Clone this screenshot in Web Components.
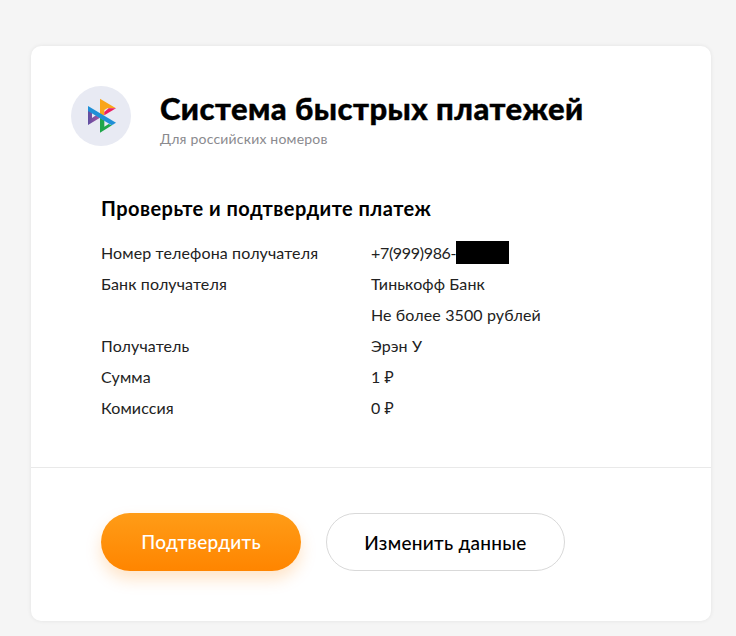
<!DOCTYPE html>
<html lang="ru">
<head>
<meta charset="utf-8">
<title>Система быстрых платежей</title>
<style>
  html, body { margin: 0; height: 100%; background: #f5f5f5; }
  body { font-family: Lato, "Noto Sans", sans-serif; overflow: hidden; }
</style>
</head>
<body>
<sbp-page>
  <sbp-card>
    <sbp-header slot="top" title="Система быстрых платежей" subtitle="Для российских номеров"></sbp-header>
    <sbp-details slot="top" heading="Проверьте и подтвердите платеж">
      <sbp-row label="Номер телефона получателя" tight>+7(999)986-<sbp-mask></sbp-mask></sbp-row>
      <sbp-row label="Банк получателя">Тинькофф Банк</sbp-row>
      <sbp-row label="">Не более 3500 рублей</sbp-row>
      <sbp-row label="Получатель">Эрэн У</sbp-row>
      <sbp-row label="Сумма">1 ₽</sbp-row>
      <sbp-row label="Комиссия">0 ₽</sbp-row>
    </sbp-details>
    <sbp-button slot="actions" kind="primary">Подтвердить</sbp-button>
    <sbp-button slot="actions">Изменить данные</sbp-button>
  </sbp-card>
</sbp-page>

<script>
class SbpPage extends HTMLElement {
  constructor() {
    super();
    this.attachShadow({ mode: 'open' }).innerHTML = `
      <style>
        :host { display: block; padding: 46px 25px 15px 31px; }
      </style>
      <slot></slot>`;
  }
}

class SbpCard extends HTMLElement {
  constructor() {
    super();
    this.attachShadow({ mode: 'open' }).innerHTML = `
      <style>
        :host {
          display: block;
          background: #fff;
          border-radius: 10px;
          box-shadow: 0 0 4px rgba(0, 0, 0, 0.08);
        }
        .top { height: 421px; border-bottom: 1px solid #e9e9e9; }
        .actions { display: flex; gap: 25px; padding: 45px 70px 50px; }
      </style>
      <div class="top"><slot name="top"></slot></div>
      <div class="actions"><slot name="actions"></slot></div>`;
  }
}

class SbpHeader extends HTMLElement {
  constructor() {
    super();
    this.attachShadow({ mode: 'open' }).innerHTML = `
      <style>
        :host { display: flex; gap: 28px; padding: 40px 40px 0; align-items: flex-start; }
        svg { width: 60px; height: 60px; flex: none; display: block; }
        h1 {
          margin: 0;
          padding: 3px 0 0 1px;
          font: 900 31px/38px Lato, "Noto Sans", sans-serif;
          letter-spacing: 0.45px;
          -webkit-text-stroke: 0.4px #000;
          color: #000;
          white-space: nowrap;
        }
        p {
          margin: 0;
          padding: 3px 0 0 1px;
          font: 14px/18px Lato, "Noto Sans", sans-serif;
          letter-spacing: 0.2px;
          color: #8a8a8e;
        }
      </style>
      <svg viewBox="33 30 180 180" aria-hidden="true">
        <defs>
          <linearGradient id="purple" x1="0" y1="0" x2="1" y2="0">
            <stop offset="0" stop-color="#5f4fa2"/>
            <stop offset="1" stop-color="#a8529f"/>
          </linearGradient>
        </defs>
        <circle cx="123" cy="120" r="90" fill="#e8eaf3"/>
        <polygon points="120,68 168,97 142,97 133,102 133,118 120,118" fill="#f9a51a"/>
        <polygon points="168,97 133,118 133,108 146,97" fill="#ea1e63"/>
        <polygon points="84,92 84,147 120,125 108,118 96,126 96,110" fill="url(#purple)"/>
        <polygon points="120,125 133,133 133,152 146,144 155,148 168,140 120,170" fill="#1fa64a"/>
        <polygon points="84,90 168,140 155,148 84,105" fill="#1f8fd6"/>
      </svg>
      <div>
        <h1></h1>
        <p></p>
      </div>`;
  }

  connectedCallback() {
    this.shadowRoot.querySelector('h1').textContent = this.getAttribute('title');
    this.shadowRoot.querySelector('p').textContent = this.getAttribute('subtitle');
  }
}

class SbpDetails extends HTMLElement {
  constructor() {
    super();
    this.attachShadow({ mode: 'open' }).innerHTML = `
      <style>
        :host { display: block; padding: 47px 70px 0; }
        h2 {
          margin: 0 0 16px;
          font: 700 20px/26px Lato, "Noto Sans", sans-serif;
          letter-spacing: 0.45px;
          color: #000;
        }
      </style>
      <h2></h2>
      <slot></slot>`;
  }

  connectedCallback() {
    this.shadowRoot.querySelector('h2').textContent = this.getAttribute('heading');
  }
}

class SbpRow extends HTMLElement {
  constructor() {
    super();
    this.attachShadow({ mode: 'open' }).innerHTML = `
      <style>
        :host {
          display: grid;
          grid-template-columns: 270px 1fr;
          height: 31px;
          align-items: center;
          font: 16px/22px Lato, "Noto Sans", sans-serif;
          letter-spacing: 0.12px;
          color: #222;
        }
        .value { display: flex; align-items: center; }
        :host([tight]) .value { letter-spacing: -0.32px; }
      </style>
      <span class="label"></span>
      <span class="value"><slot></slot></span>`;
  }

  connectedCallback() {
    this.shadowRoot.querySelector('.label').textContent = this.getAttribute('label');
  }
}

class SbpMask extends HTMLElement {
  constructor() {
    super();
    this.attachShadow({ mode: 'open' }).innerHTML = `
      <style>
        :host { display: block; flex: none; width: 53px; height: 23px; background: #000; }
      </style>`;
  }
}

class SbpButton extends HTMLElement {
  constructor() {
    super();
    this.attachShadow({ mode: 'open' }).innerHTML = `
      <style>
        :host {
          display: block;
          font: 500 19px/58px Lato, "Noto Sans", sans-serif;
          letter-spacing: 0.28px;
        }
        button {
          display: block;
          width: 239px;
          height: 58px;
          padding: 0;
          border: 1px solid #d9d9d9;
          border-radius: 29px;
          background: #fff;
          color: #000;
          font: inherit;
          letter-spacing: inherit;
          box-sizing: border-box;
        }
        :host([kind="primary"]) button {
          width: 200px;
          border: 0;
          color: #fff;
          background: linear-gradient(180deg, #ff9c17 0%, #ff8500 100%);
          box-shadow: 0 8px 16px rgba(255, 133, 0, 0.22);
        }
      </style>
      <button type="button"><slot></slot></button>`;
  }
}

customElements.define('sbp-page', SbpPage);
customElements.define('sbp-card', SbpCard);
customElements.define('sbp-header', SbpHeader);
customElements.define('sbp-details', SbpDetails);
customElements.define('sbp-row', SbpRow);
customElements.define('sbp-mask', SbpMask);
customElements.define('sbp-button', SbpButton);
</script>
</body>
</html>
